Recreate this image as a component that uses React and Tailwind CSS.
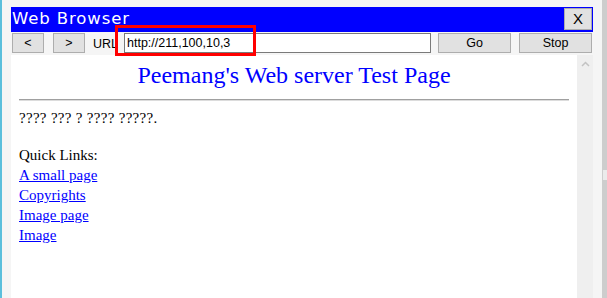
import React from "react";

const ui = { fontFamily: '"Liberation Sans", Arial, sans-serif' };
const serif = { fontFamily: '"Liberation Serif", "Times New Roman", serif' };

function ToolButton({ label, className }) {
    return (
        <button
            className={`h-[20px] border border-[#adadad] bg-[#e1e1e1] text-[12.5px] leading-none text-black ${className}`}
            style={ui}
        >
            {label}
        </button>
    );
}

export default function App() {
    const links = ["A small page", "Copyrights", "Image page", "Image"];

    return (
        <div className="relative flex h-[298px] w-[607px] overflow-hidden bg-[#f5f5f5]">
            <div className="w-[2px] shrink-0 bg-[#5bbfdc]"></div>

            <div className="ml-[9px] flex w-[582px] shrink-0 flex-col pt-[7px]">
                {/* Title bar */}
                <div className="flex h-[25px] items-start justify-between bg-[#0000ff] pl-px pr-px">
                    <span
                        className="mt-[2px] text-[16.5px] leading-[19px] tracking-[0.9px] text-white"
                        style={{ fontFamily: '"DejaVu Sans", sans-serif' }}
                    >
                        Web Browser
                    </span>
                    <button
                        className="mt-px flex h-[22px] w-[28px] items-center justify-center border border-[#adadad] bg-[#e1e1e1] text-[15px] font-light text-black"
                        style={ui}
                    >
                        X
                    </button>
                </div>

                {/* Toolbar */}
                <div className="flex h-[23px] items-start pt-px">
                    <ToolButton label="<" className="ml-px w-[32px]" />
                    <ToolButton label=">" className="ml-[9px] w-[32px]" />
                    <span className="ml-[8px] w-[31px] pt-[4px] text-[12.5px] leading-[14px] text-black" style={ui}>
                        URL
                    </span>
                    <div
                        className="flex h-[20px] w-[307px] items-center border border-[#7a7a7a] bg-white pl-[2px] text-[12.5px] text-black"
                        style={ui}
                    >
                        http://211,100,10,3
                    </div>
                    <ToolButton label="Go" className="ml-[7px] w-[73px]" />
                    <ToolButton label="Stop" className="ml-[8px] w-[73px]" />
                </div>

                {/* Page area */}
                <div className="flex flex-1">
                    <div className="w-[566px] bg-white px-[8px] pt-[6px]" style={serif}>
                        <h2 className="text-center text-[24px] leading-[28px] text-[#0000ff]">
                            Peemang's Web server Test Page
                        </h2>
                        <div className="mt-[10px] h-[2px] border-t border-b border-t-[#a0a0a0] border-b-[#dcdcdc]"></div>
                        <p className="mt-[7px] text-[15px] leading-[20px] tracking-[0.3px] text-black">
                            ???? ??? ? ???? ?????.
                        </p>
                        <p className="mt-[17px] text-[15px] leading-[20px] text-black">Quick Links:</p>
                        <div className="flex flex-col items-start text-[15px] leading-[20px]">
                            {links.map((l) => (
                                <a key={l} href="#" className="text-[#0000ff] underline">
                                    {l}
                                </a>
                            ))}
                        </div>
                    </div>
                    <div className="flex w-[16px] justify-center bg-[#efefef] pt-[6px]">
                        <svg width="9" height="6" viewBox="0 0 9 6">
                            <path d="M1 5 L4.5 1.5 L8 5" fill="none" stroke="#c3c3c3" strokeWidth="1.5" />
                        </svg>
                    </div>
                </div>
            </div>

            <div className="w-[9px] shrink-0"></div>
            <div className="flex w-[5px] shrink-0 flex-col bg-[#cdcdcd] pt-[170px]">
                <div className="ml-px h-[10px] w-[4px] bg-[#ebebeb]"></div>
            </div>

            {/* highlight around the address */}
            <div className="absolute left-[115px] top-[25px] h-[31px] w-[141px] border-[3px] border-[#ff0000]"></div>
        </div>
    );
}
